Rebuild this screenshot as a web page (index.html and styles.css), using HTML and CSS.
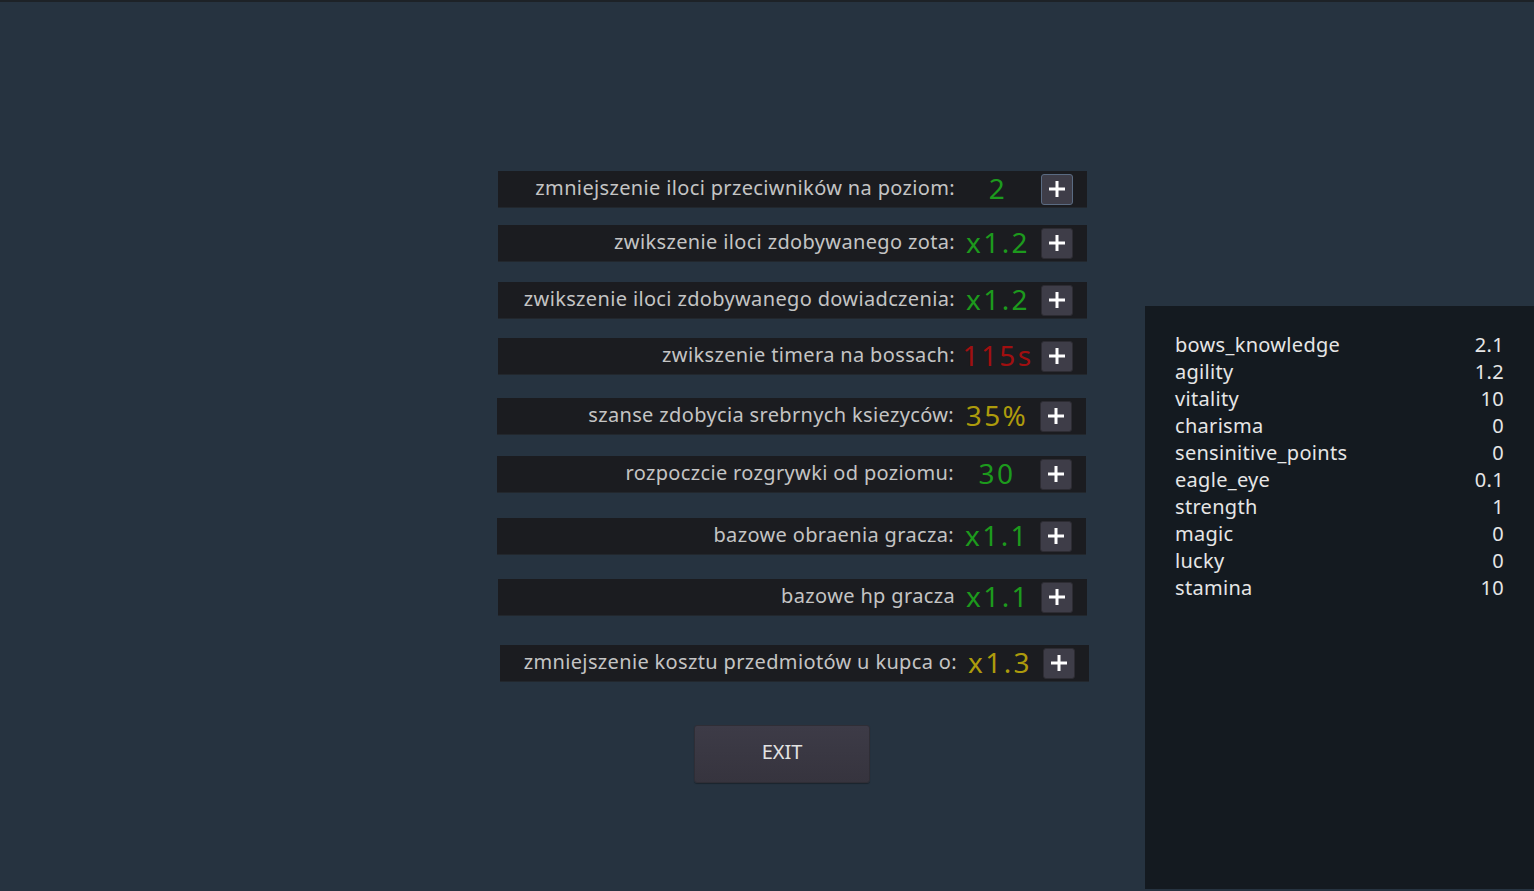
FILE: index.html
```html
<!DOCTYPE html>
<html lang="pl">
<head>
<meta charset="utf-8">
<title>Ulepszenia</title>
<link rel="stylesheet" href="styles.css">
</head>
<body>
<div class="screen">
  <main class="main">
    <div class="rows">
      <div class="row r1"><span class="label">zmniejszenie iloci przeciwników na poziom:</span><span class="value green">2</span><button class="plus"><svg viewBox="0 0 16 16" width="16" height="16"><rect x="6.5" y="0" width="3" height="16" fill="#fff"/><rect x="0" y="6.5" width="16" height="3" fill="#fff"/></svg></button></div>
      <div class="row r2"><span class="label">zwikszenie iloci zdobywanego zota:</span><span class="value green">x1.2</span><button class="plus"><svg viewBox="0 0 16 16" width="16" height="16"><rect x="6.5" y="0" width="3" height="16" fill="#fff"/><rect x="0" y="6.5" width="16" height="3" fill="#fff"/></svg></button></div>
      <div class="row r3"><span class="label">zwikszenie iloci zdobywanego dowiadczenia:</span><span class="value green">x1.2</span><button class="plus"><svg viewBox="0 0 16 16" width="16" height="16"><rect x="6.5" y="0" width="3" height="16" fill="#fff"/><rect x="0" y="6.5" width="16" height="3" fill="#fff"/></svg></button></div>
      <div class="row r4"><span class="label">zwikszenie timera na bossach:</span><span class="value red">115s</span><button class="plus"><svg viewBox="0 0 16 16" width="16" height="16"><rect x="6.5" y="0" width="3" height="16" fill="#fff"/><rect x="0" y="6.5" width="16" height="3" fill="#fff"/></svg></button></div>
      <div class="row r5"><span class="label">szanse zdobycia srebrnych ksiezyców:</span><span class="value yellow">35%</span><button class="plus"><svg viewBox="0 0 16 16" width="16" height="16"><rect x="6.5" y="0" width="3" height="16" fill="#fff"/><rect x="0" y="6.5" width="16" height="3" fill="#fff"/></svg></button></div>
      <div class="row r6"><span class="label">rozpoczcie rozgrywki od poziomu:</span><span class="value green">30</span><button class="plus"><svg viewBox="0 0 16 16" width="16" height="16"><rect x="6.5" y="0" width="3" height="16" fill="#fff"/><rect x="0" y="6.5" width="16" height="3" fill="#fff"/></svg></button></div>
      <div class="row r7"><span class="label">bazowe obraenia gracza:</span><span class="value green">x1.1</span><button class="plus"><svg viewBox="0 0 16 16" width="16" height="16"><rect x="6.5" y="0" width="3" height="16" fill="#fff"/><rect x="0" y="6.5" width="16" height="3" fill="#fff"/></svg></button></div>
      <div class="row r8"><span class="label">bazowe hp gracza</span><span class="value green">x1.1</span><button class="plus"><svg viewBox="0 0 16 16" width="16" height="16"><rect x="6.5" y="0" width="3" height="16" fill="#fff"/><rect x="0" y="6.5" width="16" height="3" fill="#fff"/></svg></button></div>
      <div class="row r9"><span class="label">zmniejszenie kosztu przedmiotów u kupca o:</span><span class="value yellow">x1.3</span><button class="plus"><svg viewBox="0 0 16 16" width="16" height="16"><rect x="6.5" y="0" width="3" height="16" fill="#fff"/><rect x="0" y="6.5" width="16" height="3" fill="#fff"/></svg></button></div>
      <div class="exit-wrap"><button class="exit">EXIT</button></div>
    </div>
  </main>
  <aside class="side">
    <ul class="stats">
      <li><span>bows_knowledge</span><span>2.1</span></li>
      <li><span>agility</span><span>1.2</span></li>
      <li><span>vitality</span><span>10</span></li>
      <li><span>charisma</span><span>0</span></li>
      <li><span>sensinitive_points</span><span>0</span></li>
      <li><span>eagle_eye</span><span>0.1</span></li>
      <li><span>strength</span><span>1</span></li>
      <li><span>magic</span><span>0</span></li>
      <li><span>lucky</span><span>0</span></li>
      <li><span>stamina</span><span>10</span></li>
    </ul>
  </aside>
</div>
</body>
</html>
```

FILE: styles.css
```css
html, body {
  margin: 0;
  padding: 0;
}
body {
  width: 1534px;
  height: 891px;
  overflow: hidden;
  background: #263340;
  font-family: "Noto Sans", "Open Sans", sans-serif;
}
.screen {
  display: flex;
  height: 889px;
  border-top: 2px solid #1d2227;
}
.main {
  width: 1145px;
  flex: none;
}
.rows {
  display: flex;
  flex-direction: column;
  padding-top: 169px;
  padding-left: 498px;
}
.row {
  width: 589px;
  height: 37px;
  box-sizing: border-box;
  background: #1b1c20;
  display: flex;
  align-items: center;
  border-bottom: 1px solid #22272d;
}
.r2 { margin-top: 17px; }
.r3 { margin-top: 20px; }
.r4 { margin-top: 19px; }
.r5 { margin-top: 23px; margin-left: -1px; }
.r6 { margin-top: 21px; margin-left: -1px; }
.r7 { margin-top: 25px; margin-left: -1px; }
.r8 { margin-top: 24px; }
.r9 { margin-top: 29px; margin-left: 2px; }
.label {
  width: 457px;
  flex: none;
  text-align: right;
  color: #c4c4c4;
  font-size: 20px;
  white-space: nowrap;
  letter-spacing: 0.35px;
  margin-top: -3px;
}
.value {
  width: 76px;
  flex: none;
  margin-left: 4px;
  margin-top: -3px;
  text-align: center;
  font-size: 28px;
  letter-spacing: 2.4px;
  line-height: 1;
  padding-left: 2px;
  box-sizing: border-box;
}
.green { color: #1d9a1d; }
.red { color: #a10f10; }
.yellow { color: #ad9b0c; }
.plus {
  margin-left: 6px;
  width: 32px;
  height: 31px;
  flex: none;
  padding: 0;
  border: 1px solid #2d2c33;
  border-radius: 3px;
  background: #3e3d48;
  display: flex;
  align-items: center;
  justify-content: center;
}
.r1 .plus {
  border-color: #5a6b82;
}
.exit-wrap {
  margin-top: 43px;
  padding-left: 196px;
}
.exit {
  width: 176px;
  height: 58px;
  border: 1px solid #2f2e36;
  border-radius: 3px;
  background: linear-gradient(#3d3b47, #36343e);
  color: #e2e2e2;
  font-family: "Noto Sans", "Open Sans", sans-serif;
  font-size: 20px;
  padding: 0 0 6px 0;
  box-shadow: 0 1px 1px rgba(0,0,0,0.3);
}
.side {
  width: 389px;
  flex: none;
  margin-top: 304px;
  height: 583px;
  background: #141a20;
}
.stats {
  list-style: none;
  margin: 0;
  padding: 25px 30px 0 30px;
}
.stats li {
  display: flex;
  justify-content: space-between;
  color: #e6e6e6;
  font-size: 20px;
  line-height: 27px;
  letter-spacing: 0.3px;
}
```
